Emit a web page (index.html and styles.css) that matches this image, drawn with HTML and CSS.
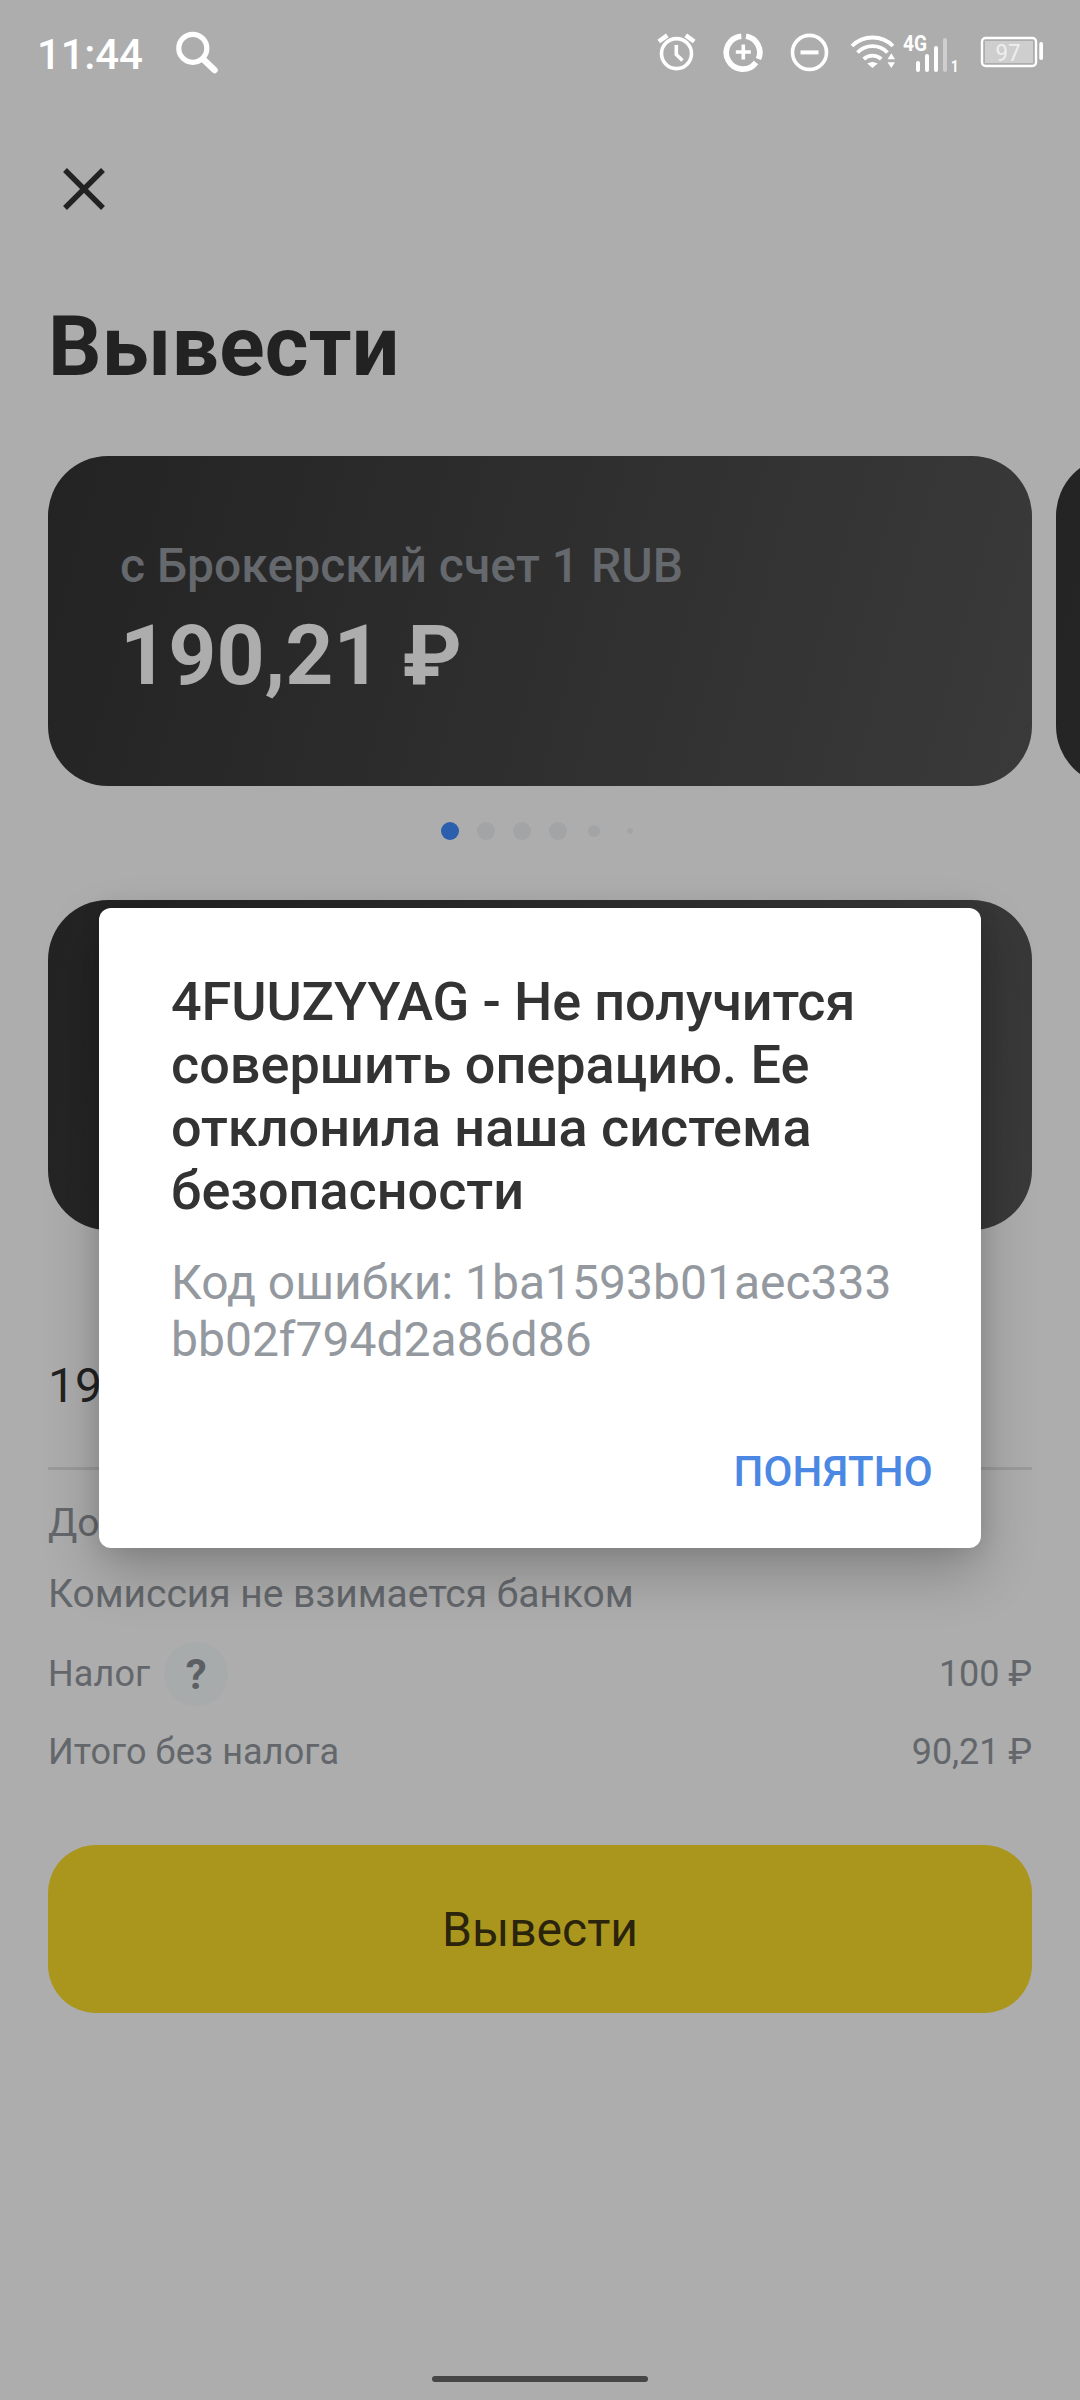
FILE: index.html
```html
<!DOCTYPE html>
<html lang="ru">
<head>
<meta charset="utf-8">
<title>Вывести</title>
<link rel="stylesheet" href="styles.css">
</head>
<body>
<div class="screen">
  <header class="status">
    <span class="clock">11:44</span>
    <svg class="search" width="46" height="46" viewBox="174 30 46 46" fill="none" stroke="#fff"><circle cx="192.8" cy="48.3" r="14" stroke-width="5.2"/><path d="M203.500 59.500L214.500 70" stroke-width="6.500" stroke-linecap="round"/></svg>
    <div class="status-icons">
      <svg width="41" height="44" viewBox="656 30 41 44" fill="none" stroke="#fff"><circle cx="676.5" cy="53.6" r="15" stroke-width="3.6"/><path d="M676.300 45V54.500L682.500 60.500" stroke-width="3.600"/><path d="M658.800 41.500L667.300 35.300M694.200 41.500L685.700 35.300" stroke-width="4.600"/></svg>
      <svg width="40" height="44" viewBox="723 30 40 44" fill="none" stroke="#fff"><path d="M741.300 36.200A16.500 16.500 0 1 0 756 62.500M746 36.200A16.500 16.500 0 0 1 758.500 59" stroke-width="5.600"/><path d="M743.300 44.500V59.500M735.800 52H750.800" stroke-width="3.600"/></svg>
      <svg width="39" height="44" viewBox="790 30 39 44" fill="none" stroke="#fff"><circle cx="809.5" cy="52.4" r="17" stroke-width="3.6"/><path d="M800.500 52.400H818.500" stroke-width="4"/></svg>
      <svg class="wifi" width="47" height="44" viewBox="850 30 47 44" fill="none" stroke="#fff"><path d="M852 46A29 29 0 0 1 893 46M857.500 52.500A21 21 0 0 1 887.500 52.500M863.700 59A13 13 0 0 1 881.300 59" stroke-width="3.800"/><path d="M867.300 63.500Q872.500 60.300 877.700 63.500L872.500 68ZM887.500 59.200L891.300 53.300L895 59.200ZM887.500 62.200H895L891.300 68Z" fill="#fff" stroke="none"/></svg>
      <svg class="signal" width="57" height="44" viewBox="902 30 57 44" fill="#fff"><text x="903" y="51" font-size="21.500" font-weight="700" textLength="24" lengthAdjust="spacingAndGlyphs">4G</text><rect x="916" y="61" width="4" height="11" rx="2"/><rect x="925" y="54" width="4" height="18" rx="2"/><rect x="934" y="46" width="4" height="26" rx="2"/><rect x="943" y="38" width="4" height="34" rx="2" opacity=".4"/><text x="951" y="71.500" font-size="16" font-weight="700" textLength="7.500" lengthAdjust="spacingAndGlyphs">1</text></svg>
      <svg class="battery" width="64" height="44" viewBox="980 30 64 44"><rect x="982" y="38" width="54" height="28" rx="3.5" fill="none" stroke="#fff" stroke-width="2.4"/><rect x="985" y="41" width="48" height="22" fill="#cecece"/><rect x="1039.300" y="42" width="3.700" height="18" rx="1.800" fill="#fff"/><text x="995.500" y="60.500" font-size="23" fill="#eee" textLength="25" lengthAdjust="spacingAndGlyphs">97</text></svg>
    </div>
  </header>

  <nav class="toolbar">
    <svg width="42" height="42" viewBox="0 0 42 42" stroke="#222" stroke-width="5.4"><path d="M2 2L40 40M40 2L2 40"/></svg>
  </nav>

  <main>
    <h1>Вывести</h1>
    <div class="carousel">
      <section class="card">
        <p class="card-label">с Брокерский счет 1 RUB</p>
        <p class="card-sum">190,21 ₽</p>
      </section>
      <section class="card"></section>
    </div>
    <div class="dots"><i class="active"></i><i></i><i></i><i></i><i class="small"></i><i class="tiny"></i></div>
    <section class="card"></section>
    <div class="amount">19</div>
    <p class="hint">До</p>
    <p class="hint fee">Комиссия не взимается банком</p>
    <div class="row tax"><span class="name">Налог</span><span class="help">?</span><span class="value">100 ₽</span></div>
    <div class="row total"><span class="name">Итого без налога</span><span class="value">90,21 ₽</span></div>
    <button class="submit">Вывести</button>
  </main>

  <div class="home-bar"></div>

  <div class="dialog">
    <h2><span class="lead">4FUUZYYAG - Не получится</span><br>совершить операцию. Ее<br>отклонила наша система<br>безопасности</h2>
    <p class="code">Код ошибки: 1ba1593b01aec333<br>bb02f794d2a86d86</p>
    <button class="confirm">ПОНЯТНО</button>
  </div>
</div>
</body>
</html>
```
FILE: styles.css
```css
* { box-sizing: border-box; margin: 0; padding: 0; }

body {
  background: #adadad;
  font-family: Roboto, "Noto Sans", sans-serif;
  color: #222;
}

button { border: 0; background: none; font: inherit; }
svg { display: block; flex: none; }

.screen {
  position: relative;
  display: flex;
  flex-direction: column;
  width: 1080px;
  height: 2400px;
  overflow: hidden;
  background: #adadad;
}

.status {
  display: flex;
  height: 106px;
  padding: 30px 36px 0 37px;
  color: #fff;
}
.clock {
  width: 137px;
  font-size: 42px;
  font-weight: 500;
  line-height: 50px;
  letter-spacing: -.2px;
}
.status-icons { display: flex; gap: 27px; margin-left: auto; }
.status-icons text { font-family: Roboto, sans-serif; }
.status-icons svg:first-child { margin-right: -1px; }
.status-icons .wifi { margin-left: -6px; }
.status-icons .signal { margin-left: -22px; }
.status-icons .battery { margin-left: -6px; }

.toolbar { height: 191px; padding: 62px 63px 0; }

main { display: flex; flex-direction: column; padding: 0 48px; }

h1 {
  font-size: 84px;
  font-weight: 700;
  line-height: 100px;
  letter-spacing: .2px;
}

.carousel {
  display: flex;
  gap: 24px;
  margin-top: 59px;
}
.card {
  flex: none;
  width: 984px;
  height: 330px;
  padding: 82px 72px 0;
  border-radius: 60px;
  background: linear-gradient(105deg, #232323, #3a3a3a);
}
.card-label {
  font-size: 48px;
  font-weight: 500;
  line-height: 56px;
  letter-spacing: .05px;
  color: #65686c;
}
.card-sum {
  margin-top: 12px;
  font-size: 84px;
  font-weight: 700;
  line-height: 100px;
  color: #adadad;
}

.dots {
  display: flex;
  justify-content: center;
  align-items: center;
  height: 90px;
  margin-bottom: 24px;
}
.dots i {
  width: 18px;
  height: 18px;
  margin: 0 9px;
  border-radius: 50%;
  background: #a2a4a5;
}
.dots .active { background: #2b5eac; }
.dots .small { width: 12px; height: 12px; margin: 0 12px; }
.dots .tiny { width: 6px; height: 6px; margin: 0 15px; }

.amount {
  height: 112px;
  margin-top: 128px;
  border-bottom: 3px solid #9b9b9b;
  font-size: 48px;
  line-height: 56px;
}
.hint {
  margin-top: 30px;
  font-size: 39px;
  line-height: 46px;
  color: #63676b;
}
.fee { margin-top: 25px; letter-spacing: -.03px; }

.row {
  display: flex;
  align-items: center;
  font-size: 36px;
  line-height: 44px;
  color: #63676b;
}
.name { letter-spacing: .1px; }
.value { margin-left: auto; letter-spacing: -.1px; }
.tax { margin-top: 25px; height: 64px; }
.total { margin-top: 24px; }
.help {
  width: 64px;
  height: 64px;
  margin-left: 14px;
  border-radius: 50%;
  background: #a8abab;
  font-size: 42px;
  font-weight: 700;
  line-height: 65px;
  text-align: center;
  color: #5c6064;
}

.submit {
  height: 168px;
  margin-top: 71px;
  border-radius: 48px;
  background: #aa961d;
  font-size: 48px;
  color: #2a240d;
}

.home-bar {
  align-self: center;
  width: 216px;
  height: 6px;
  margin: auto 0 18px;
  border-radius: 3px;
  background: #464646;
}

.dialog {
  position: absolute;
  top: 908px;
  left: 99px;
  width: 882px;
  height: 640px;
  padding: 62px 48px 0 72px;
  border-radius: 12px;
  background: #fff;
  box-shadow: 0 24px 56px rgba(0, 0, 0, .24), 0 0 20px rgba(0, 0, 0, .1);
}
h2 {
  font-size: 54px;
  font-weight: 500;
  line-height: 63px;
  color: #333;
}
.lead { letter-spacing: -.12px; }
.code {
  margin-top: 32px;
  font-size: 48px;
  line-height: 57px;
  color: #9499a0;
}
.confirm {
  display: block;
  margin: 79px 0 0 auto;
  font-size: 42px;
  font-weight: 500;
  line-height: 50px;
  letter-spacing: .2px;
  color: #4b88e3;
}
```
